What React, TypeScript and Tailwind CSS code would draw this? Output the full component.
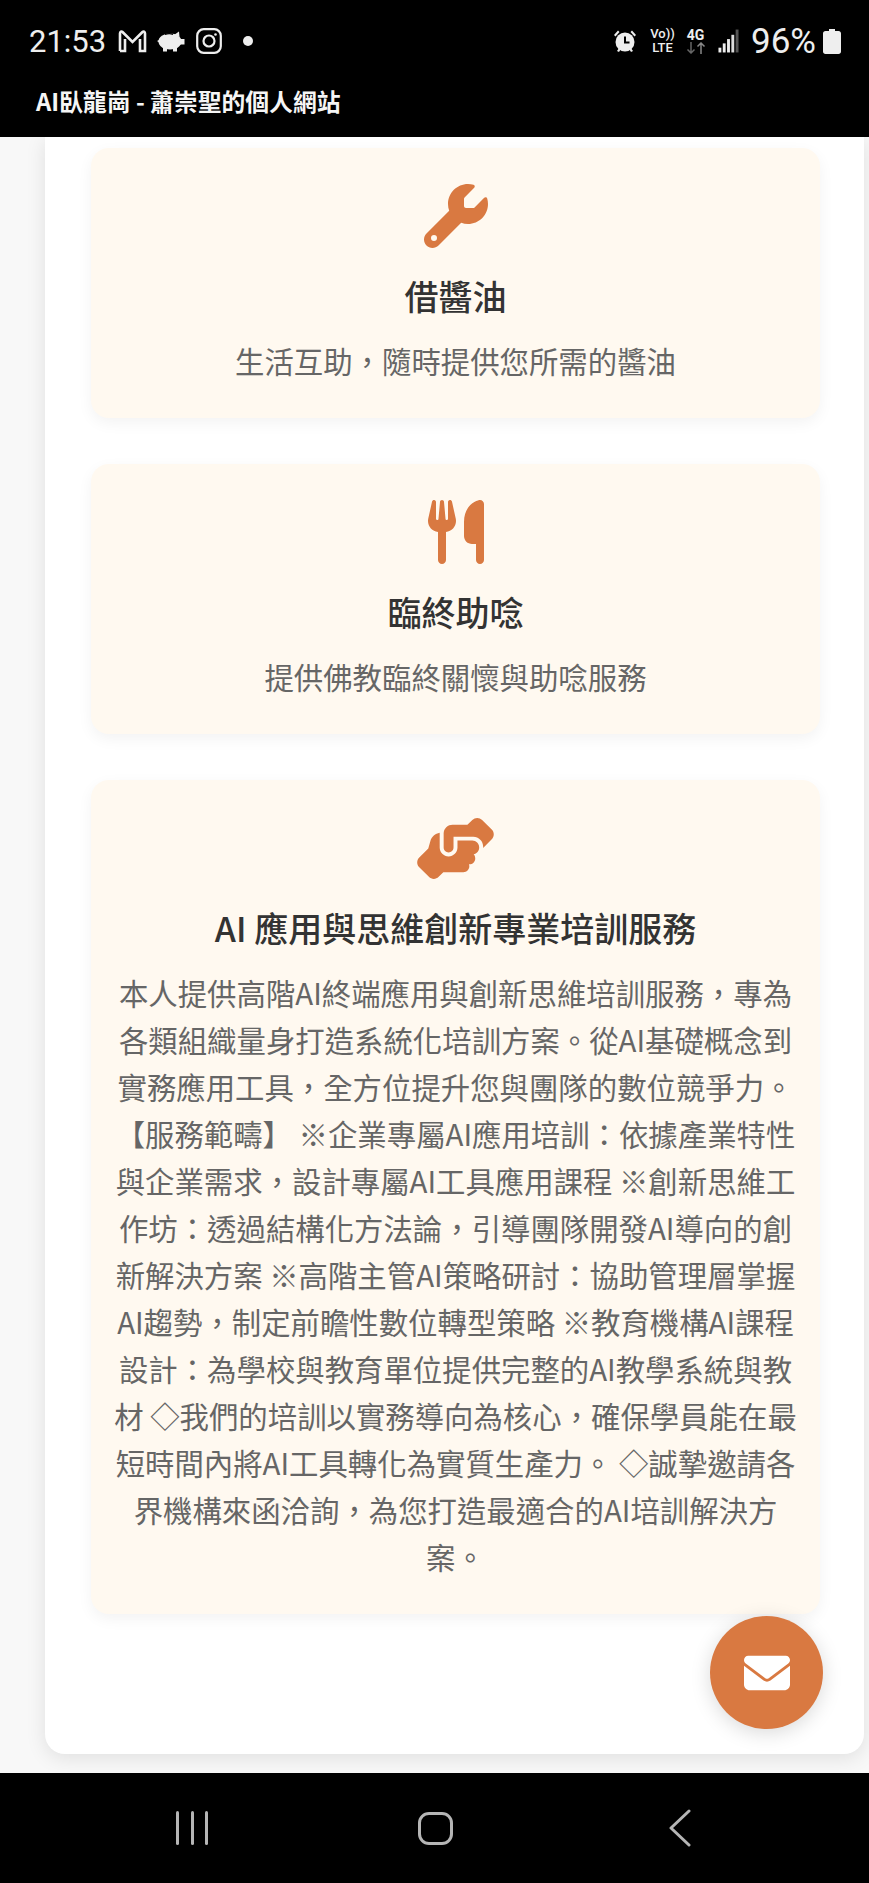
import type { ReactNode } from "react";
import { FaWrench, FaUtensils, FaHandshakeAngle, FaEnvelope } from "react-icons/fa6";

const font = { fontFamily: '"Noto Sans CJK TC", "Noto Sans", sans-serif' };
const roboto = { fontFamily: '"Roboto", sans-serif' };

function Card({ icon, title, children }: { icon: ReactNode; title: string; children: ReactNode }) {
  return (
    <div className="rounded-[18px] bg-[#fff9f0] px-[20px] pt-[36px] pb-[34px] text-center shadow-[0_5px_15px_rgba(0,0,0,0.05)]">
      <div className="flex h-[64px] items-center justify-center text-[#d97941]">{icon}</div>
      <h3 className="mt-[25px] text-[34px] leading-[46px] font-medium text-[#333]">{title}</h3>
      <p className="mt-[18px] text-[29.4px] leading-[47px] text-[#666]">{children}</p>
    </div>
  );
}

export default function App() {
  return (
    <div className="relative flex h-[1883px] w-[869px] flex-col overflow-hidden bg-black" style={font}>
      <header className="h-[137px] shrink-0 bg-black text-white">
        <div className="flex h-[82px] items-center justify-between pr-[28px] pl-[29px]">
          <div className="flex items-center">
            <span className="w-[79px] text-[31px] leading-none font-normal text-[#eee]" style={roboto}>21:53</span>
            <svg className="ml-[10px]" width="29" height="24" viewBox="0 0 29 24" fill="none" stroke="#eee" strokeWidth="2.6">
              <path d="M2 22V4.500C2 2.500 3.500 2 4.500 3L14.500 13L24.500 3C25.500 2 27 2.500 27 4.500V22H22V10M2 22H7V10" />
            </svg>
            <svg className="ml-[10px]" width="28" height="22" viewBox="0 0 28 22" fill="#eee">
              <ellipse cx="13" cy="11.500" rx="11.500" ry="8" />
              <path d="M17 5L22 1.500L22.500 7ZM21 9H27.500V14.500H21ZM0 11L3 9.500V13ZM6 16H10V21.500H6ZM16 16H20V21.500H16Z" />
              <path d="M8 4.500C10.500 3.500 14 3.500 16 4.500" fill="none" stroke="#000" strokeWidth="1.200" />
            </svg>
            <svg className="ml-[11px]" width="26" height="26" viewBox="0 0 26 26" fill="none" stroke="#eee" strokeWidth="2.2">
              <rect x="1.200" y="1.200" width="23.600" height="23.600" rx="6.500" />
              <circle cx="13" cy="13" r="5.500" />
              <circle cx="19.500" cy="6.500" r="1.300" fill="#eee" stroke="none" />
            </svg>
            <div className="ml-[21px] h-[10px] w-[10px] rounded-full bg-[#eee]" />
          </div>
          <div className="flex items-center">
            <svg width="24" height="24" viewBox="0 0 24 24" fill="#eee">
              <circle cx="12" cy="13" r="9.500" />
              <path d="M1 6L5 1.500L6.500 3L2.500 7.500ZM23 6L19 1.500L17.500 3L21.500 7.500ZM4 22L6 19L7.500 20.500L6 23ZM20 22L18 19L16.500 20.500L18 23Z" />
              <path d="M12 7.500V13.500H16.500" fill="none" stroke="#000" strokeWidth="2" />
            </svg>
            <div className="ml-[13px] flex w-[25px] flex-col items-center text-[13px] leading-[14px] font-medium text-[#eee]" style={roboto}>
              <span>Vo))</span>
              <span>LTE</span>
            </div>
            <div className="ml-[10px] flex w-[21px] flex-col items-center" style={roboto}>
              <span className="text-[14px] leading-[13px] font-bold text-[#eee]">4G</span>
              <svg width="20" height="12" viewBox="0 0 20 12" fill="none" strokeWidth="1.500">
                <path d="M5 0V11M1.500 7.500L5 11L8.500 7.500" stroke="#666" />
                <path d="M15 12V1M11.500 4.500L15 1L18.500 4.500" stroke="#888" />
              </svg>
            </div>
            <svg className="ml-[12px]" width="21" height="24" viewBox="0 0 22 24">
              <rect x="0.500" y="19" width="3" height="5" fill="#eee" />
              <rect x="5" y="14.500" width="3" height="9.500" fill="#eee" />
              <rect x="9.500" y="10" width="3" height="14" fill="#eee" />
              <rect x="14" y="5.500" width="3" height="18.500" fill="#ddd" />
              <rect x="18.500" y="0" width="3" height="24" fill="#555" />
            </svg>
            <span className="ml-[12px] w-[67px] text-[35px] leading-none font-normal text-[#eee]" style={roboto}>96%</span>
            <svg className="ml-[5px]" width="18" height="25" viewBox="0 0 18 25" fill="#eee">
              <path d="M6 0H12V2H15.500C17 2 18 3 18 4.500V22.500C18 24 17 25 15.500 25H2.500C1 25 0 24 0 22.500V4.500C0 3 1 2 2.500 2H6Z" />
            </svg>
          </div>
        </div>
        <div className="pl-[36px] text-[23.800px] leading-[38px] font-bold text-[#f5f5f5]">AI臥龍崗 - 蕭崇聖的個人網站</div>
      </header>

      <main className="relative min-h-0 flex-1 overflow-hidden bg-[#f8f8f8]">
        <div className="ml-[45px] flex w-[819px] flex-col gap-[46px] rounded-b-[20px] bg-white pt-[11px] pr-[44px] pb-[140px] pl-[46px] shadow-[0_4px_20px_rgba(0,0,0,0.1)]">
          <Card title="借醬油" icon={<FaWrench size={64} />}>生活互助，隨時提供您所需的醬油</Card>
          <Card title="臨終助唸" icon={<FaUtensils size={64} />}>提供佛教臨終關懷與助唸服務</Card>
          <Card title="AI 應用與思維創新專業培訓服務" icon={<FaHandshakeAngle size={79} />}>
            本人提供高階AI終端應用與創新思維培訓服務，專為各類組織量身打造系統化培訓方案。從AI基礎概念到實務應用工具，全方位提升您與團隊的數位競爭力。【服務範疇】 ※企業專屬AI應用培訓：依據產業特性與企業需求，設計專屬AI工具應用課程 ※創新思維工作坊：透過結構化方法論，引導團隊開發AI導向的創新解決方案 ※高階主管AI策略研討：協助管理層掌握AI趨勢，制定前瞻性數位轉型策略 ※教育機構AI課程設計：為學校與教育單位提供完整的AI教學系統與教材 ◇我們的培訓以實務導向為核心，確保學員能在最短時間內將AI工具轉化為實質生產力。 ◇誠摯邀請各界機構來函洽詢，為您打造最適合的AI培訓解決方案。
          </Card>
        </div>
        <button className="absolute top-[1479px] left-[710px] flex h-[113px] w-[113px] items-center justify-center rounded-full bg-[#d97941] text-white shadow-[0_4px_20px_rgba(0,0,0,0.15)]">
          <FaEnvelope size={46} />
        </button>
      </main>

      <footer className="flex h-[110px] shrink-0 items-center bg-black pl-[176px]">
        <div className="flex gap-[11.500px]">
          <div className="h-[34px] w-[3px] rounded-full bg-[#b5b5b5]" />
          <div className="h-[34px] w-[3px] rounded-full bg-[#b5b5b5]" />
          <div className="h-[34px] w-[3px] rounded-full bg-[#b5b5b5]" />
        </div>
        <div className="ml-[210px] h-[33px] w-[35px] rounded-[11px] border-[3px] border-[#b5b5b5]" />
        <svg className="ml-[216px]" width="22" height="38" viewBox="0 0 22 38" fill="none" stroke="#b5b5b5" strokeWidth="3" strokeLinecap="round" strokeLinejoin="round">
          <path d="M20 2L2 19L20 36" />
        </svg>
      </footer>
    </div>
  );
}
